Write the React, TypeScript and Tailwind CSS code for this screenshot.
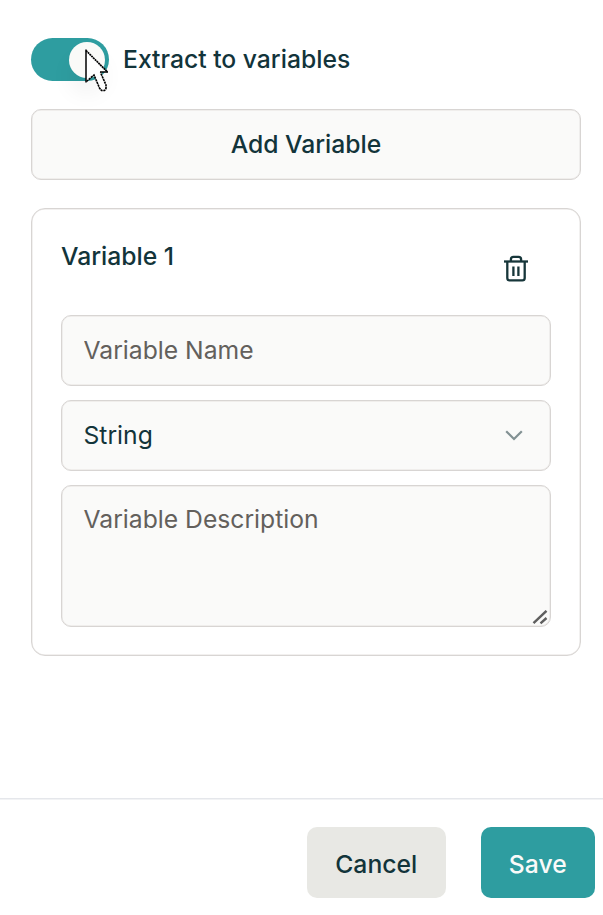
import React from 'react';

function TrashIcon() {
  return (
    <svg className="h-[28px] w-[26px]" viewBox="0 0 26 28" fill="none" stroke="#17363a" strokeWidth="2.3">
      <path d="M1 7.5H25" />
      <path d="M7.9 7.5V5.4Q7.9 2.8 10.5 2.8H15.5Q18.1 2.8 18.1 5.4V7.5" />
      <path d="M4.3 7.5V24Q4.3 26.4 6.7 26.4H19.3Q21.7 26.4 21.7 24V7.5" />
      <path d="M10.4 12.5V22M15.4 12.5V22" />
    </svg>
  );
}

function Pointer() {
  return (
    <svg className="absolute left-[52.5px] top-[9px] h-[47px] w-[27px]" viewBox="0 0 27 47">
      <path
        d="M2 2.5V35L10 28L15.5 41L17.5 43.5H20L22 41.5V38L17.5 25H23.5Z"
        fill="#fff"
      />
      <path d="M2 2.5V35.5M24 25H16" fill="none" stroke="#000" strokeWidth="1.5" />
      <path
        d="M2 3.5L23.5 25"
        fill="none"
        stroke="#000"
        strokeWidth="1.7"
        strokeDasharray="2 .5"
      />
      <path
        d="M2.5 34.5L10 28L15.5 41L17.5 43.5H20.5L22 41.5V38L16.5 25.5"
        fill="none"
        stroke="#000"
        strokeWidth="1.6"
        strokeDasharray="2.3 .6"
      />
    </svg>
  );
}

export default function App() {
  return (
    <main className="flex h-[915px] w-[603px] flex-col overflow-hidden bg-white font-['Inter',sans-serif] text-[24.7px] leading-[35px] text-[#12343a]">
      <section className="h-[798px] shrink-0 pl-[31px] pr-[22px] pt-[38px]">
        <div className="flex h-[43px] items-center gap-[14px] font-medium">
          <div className="relative h-[43px] w-[78px] shrink-0 rounded-full bg-[#2e9da0] p-[3.5px]">
            <div className="ml-[34px] size-[36px] rounded-full bg-[#fafaf8] shadow-[0_16px_22px_rgba(0,0,0,0.05)]" />
            <Pointer />
          </div>
          <span className="whitespace-nowrap">Extract to variables</span>
        </div>
        <button className="mt-[28px] block h-[71px] w-full rounded-[10px] border border-[#d8d5d3] bg-[#fafaf9] font-medium shadow-[inset_0_0_0_.5px_#e5e2e0]">
          Add Variable
        </button>
        <div className="mt-[28px] h-[448px] rounded-[14px] border border-[#d8d5d3] px-[29px] pt-[29px] shadow-[inset_0_0_0_.5px_#e5e2e0]">
          <div className="flex h-[77px] items-start justify-between">
            <h2 className="pt-px font-medium">Variable 1</h2>
            <button className="mr-[22px] mt-[16px]" aria-label="Delete variable">
              <TrashIcon />
            </button>
          </div>
          <input
            className="block h-[71px] w-full rounded-[10px] border border-[#d8d5d3] bg-[#fafaf9] px-[21.5px] pb-[2px] shadow-[inset_0_0_0_.5px_#e5e2e0] outline-none placeholder:text-[#63605c]"
            placeholder="Variable Name"
          />
          <button className="mt-[14px] flex h-[71px] w-full items-center justify-between rounded-[10px] border border-[#d8d5d3] bg-[#fafaf9] pl-[21.5px] pr-[27px] shadow-[inset_0_0_0_.5px_#e5e2e0]">
            <span>String</span>
            <svg className="h-[11px] w-[18px]" viewBox="0 0 18 11" fill="none" stroke="#829193" strokeWidth="2.2">
              <path d="M1.2 1.2L9 9L16.8 1.2" />
            </svg>
          </button>
          <div className="relative mt-[14px] h-[142px]">
            <textarea
              className="block h-full w-full resize-none rounded-[10px] border border-[#d8d5d3] bg-[#fafaf9] px-[21.5px] pt-[16px] shadow-[inset_0_0_0_.5px_#e5e2e0] outline-none placeholder:text-[#63605c]"
              placeholder="Variable Description"
            />
            <svg className="absolute bottom-[2px] right-[3px] h-[15px] w-[16px]" viewBox="0 0 16 15" fill="none" stroke="#5f5f5f" strokeWidth="2.4">
              <path d="M1.5 13.2L14.5 .8M8.5 13.4L14.5 8" />
            </svg>
          </div>
        </div>
      </section>
      <footer className="flex h-[117px] shrink-0 justify-end gap-[35px] border-t border-[#e5e7eb] pr-[8px] pt-[28px] font-medium shadow-[inset_0_.5px_0_#e5e7eb]">
        <button className="h-[71px] w-[138.5px] rounded-[10px] bg-[#e8e8e4] pt-[3px]">Cancel</button>
        <button className="h-[71px] w-[114.5px] rounded-[10px] bg-[#2e9da0] pt-[3px] text-[#fafaf9]">Save</button>
      </footer>
    </main>
  );
}
